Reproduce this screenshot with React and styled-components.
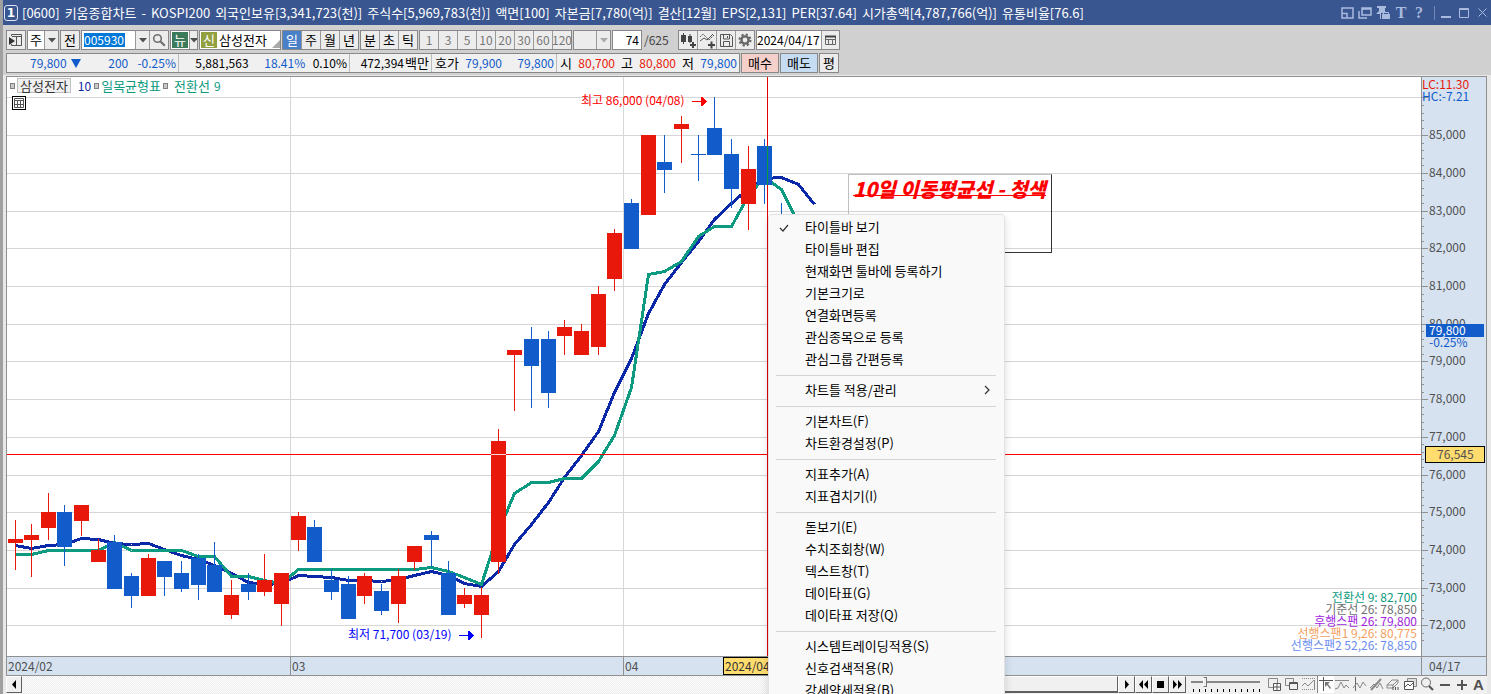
import React from "react";
import styled, { createGlobalStyle, css } from "styled-components";

const GlobalStyle = createGlobalStyle`
  * {
    box-sizing: border-box;
  }

  body {
    margin: 0;
    overflow: hidden;
  }

  button, input, select {
    font: inherit;
    color: inherit;
  }
`;

const UI_FONT = `"Noto Sans CJK KR", sans-serif`;

const RED = "#e8190a";
const BLUE = "#125bca";
const NAVY = "#0a28a8";
const TEAL = "#0c9a80";

const Window = styled.div`
  position: relative;
  display: flex;
  flex-direction: column;
  height: 100vh;
  overflow: hidden;
  background: #e8e8e8;
  border-left: 3px solid #a0a0a0;
  font: 13px/16px ${UI_FONT};
  color: #000;
  white-space: nowrap;
`;

/* ---------- title bar ---------- */

const TitleBar = styled.header`
  display: flex;
  align-items: center;
  flex: none;
  height: 25px;
  margin-left: -3px;
  padding: 0 2px 0 4px;
  background: #3a5691;
  color: #fff;
`;

const WindowNo = styled.span`
  width: 14px;
  height: 16px;
  margin-right: 4px;
  border: 1px solid #dfe6f5;
  border-radius: 3px;
  font: bold 12px/14px "DejaVu Sans", sans-serif;
  text-align: center;
`;

const TitleFields = styled.h1`
  display: flex;
  gap: 5px;
  margin: 0;
  font-size: 13px;
  font-weight: normal;
`;

const TitleTools = styled.div`
  display: flex;
  align-items: center;
  gap: 4px;
  margin-left: auto;
  color: #a9bbdf;
`;

const TitleButton = styled.button`
  display: flex;
  width: 14px;
  height: 18px;
  padding: 0;
  align-items: center;
  justify-content: center;
  background: none;
  border: none;
  font: bold 16px/18px "Liberation Serif", serif;
`;

const TitleDivider = styled.span`
  width: 1px;
  height: 14px;
  margin-left: 4px;
  background: #7388b5;
`;

/* ---------- toolbars ---------- */

const Toolbars = styled.div`
  display: flex;
  flex-direction: column;
  flex: none;
  gap: 3px;
  padding: 5px 3px 2px;
  background: #d0d0d0;
`;

const ToolRow = styled.div`
  display: flex;
  align-items: center;
  height: 20px;
  gap: 1px;
`;

const Group = styled.div`
  display: flex;
  height: 20px;
  width: ${(p) => p.$w}px;
  background: ${(p) => p.$bg || "#fff"};
  border: 1px solid #888;
  align-items: stretch;
`;

const ToolButton = styled.button`
  display: flex;
  flex: ${(p) => (p.$w ? `0 0 ${p.$w}px` : "1 1 0")};
  min-width: 0;
  align-items: center;
  justify-content: center;
  padding: 0;
  background: ${(p) => (p.$light ? "#fff" : "#ececec")};
  border: none;
  line-height: 16px;
  ${(p) => p.$line && css`border-left: 1px solid #999;`}
  ${(p) => p.$on && css`background: #4a80c8; color: #fff;`}
  ${(p) => p.$dim && css`color: #777; font-size: 12px;`}
`;

const SoloButton = styled.button`
  width: ${(p) => p.$w}px;
  height: 20px;
  padding: 0;
  background: ${(p) => p.$bg || "#ececec"};
  border: 1px solid #888;
  line-height: 16px;
`;

const Badge = styled.span`
  flex: none;
  width: 16px;
  margin: 1px;
  background: ${(p) => p.$bg};
  color: #fff;
  line-height: 16px;
  text-align: center;
`;

const Field = styled.input`
  flex: 1;
  min-width: 0;
  padding: 0 ${(p) => (p.$align ? 2 : 0)}px;
  border: none;
  background: transparent;
  font-size: 12px;
  text-align: ${(p) => p.$align || "left"};
`;

const CodeField = styled(Field)`
  flex: none;
  width: 41px;
  height: 14px;
  margin: 2px 10px 2px 2px;
  background: #0078d7;
  color: #fff;
`;

const StockName = styled.span`
  flex: 1;
  padding-left: 1px;
  line-height: 17px;
`;

const PlainSelect = styled.select`
  width: 100%;
  padding: 0 7px;
  border: none;
  background: transparent;
  appearance: none;
`;

const CountTotal = styled.span`
  width: 34px;
  padding-left: 1px;
  color: #444;
  font-size: 12px;
`;

const QuoteBox = styled.div`
  display: flex;
  width: 734px;
  height: 20px;
  background: #f0f0f0;
  border: 1px solid #888;
  font-size: 12px;
  line-height: 18px;
`;

const QuoteCell = styled.div`
  display: flex;
  justify-content: flex-end;
  width: ${(p) => p.$w}px;
  padding-right: 2px;
  border-right: ${(p) => (p.$last ? "none" : "1px solid #bbb")};
`;

const Quote = styled.span`
  width: ${(p) => p.$w}px;
  color: ${(p) => p.$c || "#000"};
  text-align: right;
`;

const QuoteLabel = styled.span`
  width: ${(p) => p.$w}px;
  font-size: 13px;
  text-align: right;
`;

/* ---------- chart ---------- */

const ChartFrame = styled.main`
  display: grid;
  flex: 1;
  min-height: 0;
  grid-template-columns: 1fr 65px;
  grid-template-rows: 1fr 20px;
  margin: 1px 4px 0 3px;
  border: 1px solid #909090;
  border-bottom: none;
`;

const Plot = styled.div`
  position: relative;
  min-height: 0;
  overflow: hidden;
  background: #fff;
`;

const Drawing = styled.svg`
  display: block;
  width: 100%;
  height: 100%;
  font: 12px ${UI_FONT};
`;

const PriceAxis = styled.div`
  min-height: 0;
  overflow: hidden;
  background: #d6e2f0;
  border-left: 1px solid #909090;
`;

const DateAxis = styled.div`
  display: flex;
  background: #d6e2f0;
  border-top: 1px solid #909090;
  border-bottom: 1px solid #909090;
  color: #505050;
  font-size: 12px;
  line-height: 17px;
`;

const DateCell = styled.span`
  width: ${(p) => p.$w}px;
  padding-left: 1px;
  border-right: ${(p) => (p.$open ? "none" : "1px solid #909090")};
`;

const DateCursor = styled.span`
  width: 70px;
  padding-left: 1px;
  background: #ffdc6e;
  border: 1px solid #000;
  color: #333;
  line-height: 15px;
`;

const LastDate = styled(DateAxis)`
  padding-left: 7px;
  border-left: 1px solid #909090;
`;

const Legend = styled.div`
  position: absolute;
  top: 1px;
  left: 3px;
  display: flex;
  align-items: center;
  gap: 2px;
  height: 15px;
  font-size: 13px;
  line-height: 15px;
  color: ${TEAL};
`;

const LegendDot = styled.span`
  width: 5px;
  height: 6px;
  background: #c8c8c8;
  border: 1px solid #808080;
`;

const LegendName = styled.span`
  height: 15px;
  margin-right: 5px;
  padding: 0 2px;
  background: #f0f0f0;
  border: 1px solid #c0c0c0;
  color: #333;
  line-height: 13px;
`;

const LegendItem = styled.span`
  color: ${(p) => p.$c};
  padding-left: ${(p) => p.$pl || 0}px;
`;

const LegendNumber = styled(LegendItem)`
  padding-right: 1px;
  font-size: 12px;
`;

const TableButton = styled.button`
  position: absolute;
  top: 19px;
  left: 5px;
  display: flex;
  width: 14px;
  height: 14px;
  padding: 0;
  background: #fff;
  border: 1px solid #000;
`;

const Values = styled.ul`
  position: absolute;
  right: 4px;
  bottom: 5px;
  margin: 0;
  padding: 0;
  list-style: none;
  font-size: 12px;
  line-height: 12px;
  text-align: right;
`;

const ValueRow = styled.li`
  color: ${(p) => p.$c};
`;

const Memo = styled.div`
  position: absolute;
  left: 841px;
  top: 97px;
  width: 204px;
  height: 79px;
  padding: 0 4px;
  border: 1px solid #333;
  border-top-color: #c0c0c0;
  border-left-color: #c0c0c0;
  color: #f00;
  font: italic 900 20px/28px "Noto Sans CJK KR", sans-serif;
  text-decoration: underline 1px;
  text-decoration-skip-ink: none;
  text-underline-offset: -2px;
`;

/* ---------- bottom bar ---------- */

const BottomBar = styled.footer`
  display: flex;
  flex: none;
  height: 18px;
  margin: 0 4px 0 3px;
  background: #f0f0f0;
`;

const RaisedButton = styled.button`
  display: flex;
  flex: none;
  width: ${(p) => p.$w || 17}px;
  height: 17px;
  padding: 0;
  align-items: center;
  justify-content: center;
  background: #f0f0f0;
  border: 1px solid #fff;
  border-right-color: #606060;
  border-bottom-color: #606060;
`;

const Track = styled.div`
  display: flex;
  flex: 1;
  justify-content: flex-end;
  height: 17px;
  background: repeating-conic-gradient(#eeeeee 0 25%, #fdfdfd 0 50%) 0 0 / 2px 2px;
`;

const Thumb = styled.div`
  width: 350px;
  background: #f0f0f0;
  border: 1px solid #fff;
  border-right-color: #606060;
  border-bottom: 2px solid #606060;
`;

const SpeedSlider = styled.input`
  width: 69px;
  height: 16px;
  margin: 0 6px 0 5px;
  padding: 0 0 4px;
  appearance: none;
  background:
    linear-gradient(#888, #888) 0 5px / 100% 2px no-repeat,
    repeating-linear-gradient(90deg, transparent 0 2px, #000 2px 3px, transparent 3px 6px) 0 13px / 100% 3px no-repeat;

  &::-webkit-slider-thumb {
    appearance: none;
    width: 4px;
    height: 10px;
    background: #eee;
    border: 1px solid #777;
    border-left-color: #fff;
  }
`;

const BottomTools = styled.div`
  display: flex;
`;

const BottomTool = styled.button`
  display: flex;
  width: 17px;
  height: 17px;
  padding: 0;
  align-items: center;
  justify-content: center;
  background: ${(p) => (p.$on ? "#fff" : "none")};
  border: none;
  border-left: ${(p) => (p.$on ? "1px solid #888" : "none")};
  color: #505050;
  font: bold 15px/17px "Liberation Sans", sans-serif;
`;

/* ---------- context menu ---------- */

const Menu = styled.div`
  position: absolute;
  left: 765px;
  top: 214px;
  width: 237px;
  padding: 1px 8px 1px 7px;
  background: #f9f9f9;
  border: 1px solid #e2e2e2;
  border-radius: 4px;
  box-shadow: 0 4px 8px rgba(0, 0, 0, 0.14);
  font: 13px/22px "Noto Sans CJK KR", sans-serif;
`;

const MenuItem = styled.button`
  display: flex;
  width: 100%;
  height: 22px;
  padding: 0 5px 0 0;
  align-items: center;
  background: none;
  border: none;
  text-align: left;
`;

const MenuMark = styled.span`
  display: flex;
  width: 29px;
  padding-left: 3px;
`;

const MenuText = styled.span`
  flex: 1;
`;

const MenuLine = styled.hr`
  height: 1px;
  margin: 5px 0 3px;
  border: none;
  background: #d4d4d4;
`;

/* ---------- data ---------- */

const titleFields = [
  "[0600]", "키움종합차트", "-", "KOSPI200", "외국인보유[3,341,723(천)]", "주식수[5,969,783(천)]",
  "액면[100]", "자본금[7,780(억)]", "결산[12월]", "EPS[2,131]", "PER[37.64]",
  "시가총액[4,787,766(억)]", "유통비율[76.6]",
];

// high, body top, body bottom, low, up(1) / down(0)
const candles = [
  [520, 539, 543, 570, 1], [524, 535, 540, 577, 1], [493, 512, 528, 540, 1], [505, 512, 547, 566, 0],
  [505, 505, 521, 536, 1], [539, 550, 562, 562, 1], [535, 542, 589, 589, 0], [573, 576, 596, 608, 0],
  [554, 558, 596, 596, 1], [561, 561, 577, 596, 0], [561, 573, 589, 592, 0], [554, 558, 585, 600, 0],
  [542, 565, 592, 592, 0], [580, 595, 615, 619, 1], [573, 584, 592, 600, 0], [554, 580, 592, 596, 1],
  [573, 573, 604, 626, 1], [512, 516, 540, 551, 1], [520, 527, 562, 562, 0], [569, 580, 592, 600, 0],
  [576, 584, 619, 619, 0], [573, 576, 596, 604, 1], [584, 591, 611, 615, 0], [569, 576, 604, 623, 1],
  [546, 546, 562, 570, 1], [531, 535, 540, 567, 0], [561, 573, 615, 615, 0], [588, 595, 604, 608, 1],
  [587, 595, 615, 638, 1], [429, 441, 562, 574, 1], [350, 350, 355, 411, 1], [327, 339, 366, 408, 0],
  [331, 339, 393, 408, 0], [320, 327, 336, 355, 1], [324, 331, 355, 355, 1], [286, 294, 347, 355, 1],
  [229, 233, 279, 291, 1], [199, 203, 249, 249, 0], [135, 135, 215, 215, 1], [135, 162, 170, 193, 0],
  [116, 124, 129, 163, 1], [135, 154, 155, 181, 0], [97, 128, 155, 155, 0], [139, 154, 189, 208, 0],
  [146, 169, 204, 230, 1], [139, 146, 185, 204, 0], [203, 218, 250, 260, 0],
];

const average10 = [
  545, 548, 545, 544, 538, 539, 543, 544, 543, 549, 555, 559, 565, 573, 582, 584, 583, 575, 576, 577,
  580, 580, 581, 579, 575, 571, 575, 583, 586, 571, 544, 524, 502, 477, 455, 431, 392, 358, 313, 284,
  262, 241, 219, 203, 188, 178, 177, 184, 204,
];

const turning9 = [
  554, 554, 550, 550, 550, 550, 542, 550, 550, 550, 550, 556, 556, 576, 576, 580, 583, 569, 569, 569,
  569, 569, 569, 569, 569, 567, 571, 577, 584, 531, 493, 482, 482, 478, 478, 461, 435, 387, 274, 271,
  261, 236, 226, 226, 195, 177, 189, 223,
];

const values = [
  ["전환선 9: 82,700", TEAL],
  ["기준선 26: 78,850", "#707070"],
  ["후행스팬 26: 79,800", "#a01ee0"],
  ["선행스팬1 9,26: 80,775", "#f5a05f"],
  ["선행스팬2 52,26: 78,850", "#6a8cf0"],
];

const menuGroups = [
  ["타이틀바 보기", "타이틀바 편집", "현재화면 툴바에 등록하기", "기본크기로", "연결화면등록", "관심종목으로 등록", "관심그룹 간편등록"],
  ["차트틀 적용/관리"],
  ["기본차트(F)", "차트환경설정(P)"],
  ["지표추가(A)", "지표겹치기(I)"],
  ["돋보기(E)", "수치조회창(W)", "텍스트창(T)", "데이타표(G)", "데이타표 저장(Q)"],
  ["시스템트레이딩적용(S)", "신호검색적용(R)", "강세약세적용(B)"],
];

const candleX = (i) => Math.floor(15 + i * 16.66);
const priceY = (price) => Math.floor(97.95 + (86000 - price) * 0.03771);
const toPoints = (line) => line.map((y, i) => `${candleX(i) + 0.5},${y + 0.5}`).join(" ");
const prices = Array.from({ length: 15 }, (_, i) => 86000 - i * 1000);

/* ---------- icons ---------- */

const DownArrow = ({ color = "#505050" }) => (
  <svg width="8" height="5"><path d="M0 0h8L4 4.5z" fill={color} /></svg>
);

const SearchIcon = () => (
  <svg width="14" height="14" fill="none" stroke="#707070" strokeWidth="1.6">
    <circle cx="5.5" cy="5.5" r="3.8" /><path d="M8.3 8.3l4.5 4.5" strokeWidth="2.2" />
  </svg>
);

const PanelIcon = () => (
  <svg width="14" height="14" fill="none" stroke="#555">
    <path d="M2.500 3V1.500h10v11h-10V11" /><path d="M3 3.500h9M7.500 4v8" />
    <path d="M0 4l6 4-6 4z" fill="#333" stroke="none" />
  </svg>
);

const CandleAddIcon = () => (
  <svg width="17" height="17" fill="#444">
    <path d="M1 3h5v7H1zM3 1h1v11H3zM8 4h4v6H8zM9.500 2h1v9h-1z" />
    <path d="M10 12h6v2h-6zM12 10h2v6h-2z" />
  </svg>
);

const LineAddIcon = () => (
  <svg width="17" height="17" fill="none" stroke="#555">
    <path d="M1 5l3-3 6 6 5-5" strokeDasharray="2 1" /><path d="M1 9l4-3 3 2 6-6" />
    <path d="M9 13h7M12.500 9.500v7" stroke="#444" strokeWidth="2" />
  </svg>
);

const SaveIcon = () => (
  <svg width="15" height="15" fill="none" stroke="#555">
    <path d="M1.500 1.500h10l2 2v10h-12z" /><path d="M4.500 2v4h6V2M4.500 13V8.500h6V13" /><path d="M8.500 3v2" />
  </svg>
);

const GearIcon = () => (
  <svg width="14" height="14" fill="none" stroke="#666">
    <circle cx="7" cy="7" r="3.600" strokeWidth="2.400" />
    <circle cx="7" cy="7" r="5.500" strokeWidth="2" strokeDasharray="2.200 2.120" />
  </svg>
);

const CalendarIcon = () => (
  <svg width="13" height="12" fill="none" stroke="#666">
    <path d="M1.500 2.500h10v8h-10zM1 5.500h11M4.500 6v5M8.500 6v5" /><path d="M1 2.500h11" stroke="#444" strokeWidth="2" />
  </svg>
);

const bottomIcons = [
  <><path d="M1.500 1.500h9v9h-9z" /><path d="M6.500 6.500h7v7h-7zM10 7v6M7 10h6" stroke="#555" fill="#fff" /></>,
  <><path d="M1.500 1.500h8v7h-8z" /><path d="M5.500 5.500h8v7h-8zM5 6.500h9" stroke="#555" fill="#f0f0f0" /></>,
  <><path d="M1 1.500h13M1 12.500h13" strokeDasharray="1 1" /><path d="M1 9l3-3 3 3 6-6M13.500 3v9" /></>,
  <><path d="M0 3.500h14M4.500 0v14" stroke="#555" /><path d="M6 5h5l-2 2 3 4-1 1-3-4-2 2z" fill="#777" stroke="none" /></>,
  <><path d="M0 3.500h14M0 12l3-1 3-6 3 6 2-3 3 3" /></>,
  <><path d="M3.500 0v14" stroke="#666" /><path d="M1 11l4-5 3 5 3-6 3 4" /></>,
  <><path d="M2 13L12 2" strokeWidth="2" /><path d="M1 11l4-4 3 4 3-5 3 6" /></>,
  <><path d="M1 8l5-5h6v3l-5 5H1zM1 8h6l5-5M7 8v3" /><path d="M7 13v-3M9.500 13v-3M12 13v-3" stroke="#555" /></>,
  <><path d="M4.500 1.500h9v8h-9z" fill="#ddd" /><path d="M1.500 4.500h9v8h-9z" fill="#fff" stroke="#555" /><path d="M2 10l3-3 2 2 3-3" stroke="#555" /></>,
  <><circle cx="6" cy="5.500" r="4.500" stroke="#666" /><path d="M9 9l4 4" stroke="#555" strokeWidth="2.200" /></>,
];

const PlayIcon = ({ d }) => (
  <svg width="11" height="9"><path d={d} fill="#000" /></svg>
);

/* ---------- parts ---------- */

const Title = () => (
  <TitleBar>
    <WindowNo>1</WindowNo>
    <TitleFields>{titleFields.map((t) => <span key={t}>{t}</span>)}</TitleFields>
    <TitleTools>
      <TitleButton aria-label="크기">
        <svg width="13" height="12" fill="none" stroke="currentColor"><path d="M1 1h11v10H1z" strokeWidth="1.500" /><path d="M1 6.500h5v4" strokeWidth="1.500" /></svg>
      </TitleButton>
      <TitleButton aria-label="복제">
        <svg width="14" height="12" fill="none" stroke="currentColor" strokeWidth="1.500"><path d="M4 1h9v7H4zM4 2h9M1 4v7h8" /></svg>
      </TitleButton>
      <TitleButton aria-label="고정">
        <svg width="14" height="15"><path d="M1 1h9v2H9v3l1 2H5v6H4V9H0l3-3V3H1z" fill="currentColor" /><path d="M6 9h8v5H6z" fill="currentColor" /><path d="M7.500 9V7.500h5V9" fill="none" stroke="currentColor" /></svg>
      </TitleButton>
      <TitleButton>T</TitleButton>
      <TitleButton>?</TitleButton>
      <TitleDivider />
      <TitleButton aria-label="최소화">
        <svg width="10" height="12"><path d="M0 9h10v2H0z" fill="currentColor" /></svg>
      </TitleButton>
      <TitleButton aria-label="최대화">
        <svg width="10" height="10" fill="none" stroke="currentColor"><path d="M.5.5h9v9h-9zM0 1.500h10" /></svg>
      </TitleButton>
      <TitleButton aria-label="닫기">
        <svg width="9" height="9" stroke="currentColor"><path d="M.5.5l8 8M8.500.5l-8 8" /></svg>
      </TitleButton>
    </TitleTools>
  </TitleBar>
);

const Toolbar = () => (
  <Toolbars>
    <ToolRow>
      <Group $w={20}><ToolButton aria-label="패널"><PanelIcon /></ToolButton></Group>
      <Group $w={32}>
        <ToolButton $w={16} $light>주</ToolButton>
        <ToolButton $line aria-label="주기 선택"><DownArrow /></ToolButton>
      </Group>
      <SoloButton $w={20}>전</SoloButton>
      <Group $w={88}>
        <CodeField aria-label="종목코드" defaultValue="005930" />
        <ToolButton $line aria-label="최근 종목"><DownArrow /></ToolButton>
        <ToolButton $line $w={19} aria-label="검색"><SearchIcon /></ToolButton>
      </Group>
      <Group $w={28}>
        <Badge $bg="#3c7a5c">뉴</Badge>
        <ToolButton $line aria-label="뉴스 선택"><DownArrow /></ToolButton>
      </Group>
      <Group $w={82}>
        <Badge $bg="#93a040">신</Badge>
        <StockName>삼성전자</StockName>
        <svg width="8" height="18"><path d="M8 9v8H0z" fill="#aaa" /></svg>
      </Group>
      <Group $w={77}>
        {["일", "주", "월", "년"].map((t, i) => <ToolButton key={t} $on={i === 0} $line={i > 0}>{t}</ToolButton>)}
      </Group>
      <Group $w={58}>
        {["분", "초", "틱"].map((t, i) => <ToolButton key={t} $line={i > 0}>{t}</ToolButton>)}
      </Group>
      <Group $w={153}>
        {["1", "3", "5", "10", "20", "30", "60", "120"].map((t, i) => <ToolButton key={t} $dim $line={i > 0}>{t}</ToolButton>)}
      </Group>
      <Group $w={38} $bg="#ececec">
        <PlainSelect aria-label="분 간격" disabled />
        <ToolButton $line $w={14} disabled aria-label="간격 선택"><DownArrow color="#aaa" /></ToolButton>
      </Group>
      <Group $w={30}><Field aria-label="봉 개수" defaultValue="74" $align="right" /></Group>
      <CountTotal>/625</CountTotal>
      <Group $w={77}>
        <ToolButton aria-label="종목 추가"><CandleAddIcon /></ToolButton>
        <ToolButton $line aria-label="지표 추가"><LineAddIcon /></ToolButton>
        <ToolButton $line aria-label="저장"><SaveIcon /></ToolButton>
        <ToolButton $line aria-label="설정"><GearIcon /></ToolButton>
      </Group>
      <Group $w={84}>
        <Field aria-label="날짜" defaultValue="2024/04/17" />
        <ToolButton $line $w={18} aria-label="달력"><CalendarIcon /></ToolButton>
      </Group>
    </ToolRow>
    <ToolRow>
      <QuoteBox>
        <QuoteCell $w={172}>
          <Quote $w={60} $c={BLUE}>79,800</Quote>
          <Quote $w={14} $c={BLUE}><svg width="10" height="10"><path d="M0 1h10L5 10z" fill={BLUE} /></svg></Quote>
          <Quote $w={48} $c={BLUE}>200</Quote>
          <Quote $w={48} $c={BLUE}>-0.25%</Quote>
        </QuoteCell>
        <QuoteCell $w={171}>
          <Quote $w={70}>5,881,563</Quote>
          <Quote $w={57} $c={BLUE}>18.41%</Quote>
          <Quote $w={42}>0.10%</Quote>
        </QuoteCell>
        <QuoteCell $w={82}>
          <Quote $w={54}>472,394</Quote><QuoteLabel $w={25}>백만</QuoteLabel>
        </QuoteCell>
        <QuoteCell $w={125}>
          <QuoteLabel $w={26}>호가</QuoteLabel>
          <Quote $w={43} $c={BLUE}>79,900</Quote>
          <Quote $w={52} $c={BLUE}>79,800</Quote>
        </QuoteCell>
        <QuoteCell $w={182} $last>
          <QuoteLabel $w={12}>시</QuoteLabel>
          <Quote $w={43} $c={RED}>80,700</Quote>
          <QuoteLabel $w={18}>고</QuoteLabel>
          <Quote $w={43} $c={RED}>80,800</Quote>
          <QuoteLabel $w={18}>저</QuoteLabel>
          <Quote $w={43} $c={BLUE}>79,800</Quote>
        </QuoteCell>
      </QuoteBox>
      <SoloButton $w={38} $bg="#f5cfca">매수</SoloButton>
      <SoloButton $w={38} $bg="#c5dcf3">매도</SoloButton>
      <SoloButton $w={20}>평</SoloButton>
    </ToolRow>
  </Toolbars>
);

const PricePlot = () => (
  <Drawing shapeRendering="crispEdges">
    <g transform="translate(-7 -77)">
      <g fill="#d6d6d6">
        {prices.map((p) => <rect key={p} x="7" y={priceY(p)} width="3000" height="1" />)}
        <rect x="290" y="77" width="1" height="2000" />
        <rect x="623" y="77" width="1" height="2000" />
      </g>
      <g fill="none" strokeWidth="3">
        <polyline points={toPoints(average10)} stroke={NAVY} />
        <polyline points={toPoints(turning9)} stroke={TEAL} />
      </g>
      {candles.map(([high, top, bottom, low, up], i) => (
        <g key={i} fill={up ? RED : BLUE}>
          <rect x={candleX(i)} y={high} width="1" height={low - high} />
          <rect x={candleX(i) - 7} y={top} width="15" height={bottom - top} />
        </g>
      ))}
      <rect x="7" y="454" width="3000" height="1" fill="#f00" />
      <rect x="491" y="454" width="15" height="1" fill="#fcd8d8" />
      <rect x="767" y="77" width="1" height="2000" fill="#e00000" />
      <rect x="767" y="146" width="1" height="39" fill="#0c9a40" />
      <g fill="#f00">
        <text x="581" y="105">최고 86,000 (04/08)</text>
        <path d="M692 101h9v-4h1l5 4.500-5 4.500h-1v-4h-9z" />
      </g>
      <g fill="#00f">
        <text x="348" y="639">최저 71,700 (03/19)</text>
        <path d="M459 635h9v-4h1l5 4.500-5 4.500h-1v-4h-9z" />
      </g>
    </g>
  </Drawing>
);

const PriceScale = () => (
  <Drawing fill="#505050">
    <g transform="translate(-1422 -77)">
      <g fill="#909090" shapeRendering="crispEdges">
        {prices.map((p) => <rect key={p} x="1422" y={priceY(p)} width="6" height="1" />)}
        {Array.from({ length: 73 }, (_, i) => (
          <rect key={i} x="1422" y={priceY(86000 - i * 200)} width="2" height="1" />
        ))}
      </g>
      {prices.slice(1).map((p) => (
        <text key={p} x="1429" y={priceY(p) + 4}>{p.toLocaleString("en-US")}</text>
      ))}
      <text x="1422" y="89" fill={RED}>LC:11.30</text>
      <text x="1422" y="101" fill={BLUE}>HC:-7.21</text>
      <rect x="1426" y="324" width="58" height="13" fill={BLUE} />
      <text x="1429" y="335" fill="#fff">79,800</text>
      <text x="1429" y="347" fill={BLUE}>-0.25%</text>
      <rect x="1425.500" y="446.500" width="59" height="16" fill="#ffdc6e" stroke="#000" />
      <text x="1437" y="459">76,545</text>
    </g>
  </Drawing>
);

const Chart = () => (
  <ChartFrame>
    <Plot>
      <PricePlot />
      <Legend>
        <LegendDot />
        <LegendName>삼성전자</LegendName>
        <LegendNumber $c={NAVY}>10</LegendNumber>
        <LegendDot />
        <LegendItem>일목균형표</LegendItem>
        <LegendDot />
        <LegendItem $pl={4}>전환선</LegendItem>
        <LegendNumber $pl={2}>9</LegendNumber>
      </Legend>
      <TableButton aria-label="데이타표">
        <svg width="12" height="12" fill="none" stroke="#555"><path d="M1.500 1.500h9v9h-9zM2 3.500h8M4.500 4v6M7.500 4v6M2 7.500h8" /></svg>
      </TableButton>
      <Values>{values.map(([t, c]) => <ValueRow key={t} $c={c}>{t}</ValueRow>)}</Values>
      <Memo>10일 이동평균선 - 청색</Memo>
    </Plot>
    <PriceAxis><PriceScale /></PriceAxis>
    <DateAxis>
      <DateCell $w={284}>2024/02</DateCell>
      <DateCell $w={333}>03</DateCell>
      <DateCell $w={99} $open>04</DateCell>
      <DateCursor>2024/04/17</DateCursor>
    </DateAxis>
    <LastDate>04/17</LastDate>
  </ChartFrame>
);

const Bottom = () => (
  <BottomBar>
    <RaisedButton $w={16} aria-label="왼쪽"><PlayIcon d="M7 0v9L3 4.500z" /></RaisedButton>
    <Track><Thumb /></Track>
    <RaisedButton aria-label="재생"><PlayIcon d="M4 0v9l4-4.500z" /></RaisedButton>
    <RaisedButton aria-label="뒤로"><PlayIcon d="M5 0v9L1 4.500zM10 0v9L6 4.500z" /></RaisedButton>
    <RaisedButton aria-label="정지"><PlayIcon d="M2 1h7v7H2z" /></RaisedButton>
    <RaisedButton aria-label="앞으로"><PlayIcon d="M1 0v9l4-4.500zM6 0v9l4-4.500z" /></RaisedButton>
    <SpeedSlider type="range" min="0" max="11" defaultValue="2" aria-label="속도" />
    <BottomTools>
      {bottomIcons.map((icon, i) => (
        <BottomTool key={i} $on={i === 3} aria-label={`도구 ${i + 1}`}>
          <svg width="15" height="15" fill="none" stroke="#888">{icon}</svg>
        </BottomTool>
      ))}
      <BottomTool aria-label="축소"><svg width="10" height="10"><path d="M0 4h10v2H0z" fill="#555" /></svg></BottomTool>
      <BottomTool aria-label="확대"><svg width="10" height="10"><path d="M0 4h10v2H0zM4 0h2v10H4z" fill="#555" /></svg></BottomTool>
      <BottomTool aria-label="자동">A</BottomTool>
    </BottomTools>
  </BottomBar>
);

const ContextMenu = () => (
  <Menu role="menu">
    {menuGroups.map((group, g) => (
      <React.Fragment key={g}>
        {g > 0 && <MenuLine />}
        {group.map((text, i) => (
          <MenuItem key={text} role="menuitem">
            <MenuMark>
              {g === 0 && i === 0 && (
                <svg width="10" height="9" fill="none" stroke="#333" strokeWidth="1.200"><path d="M1 5l3 3 5-6" /></svg>
              )}
            </MenuMark>
            <MenuText>{text}</MenuText>
            {g === 1 && (
              <svg width="8" height="10" fill="none" stroke="#333" strokeWidth="1.200"><path d="M2 1l4 4-4 4" /></svg>
            )}
          </MenuItem>
        ))}
      </React.Fragment>
    ))}
  </Menu>
);

export default function App() {
  return (
    <>
      <GlobalStyle />
      <Window>
        <Title />
        <Toolbar />
        <Chart />
        <Bottom />
        <ContextMenu />
      </Window>
    </>
  );
}
